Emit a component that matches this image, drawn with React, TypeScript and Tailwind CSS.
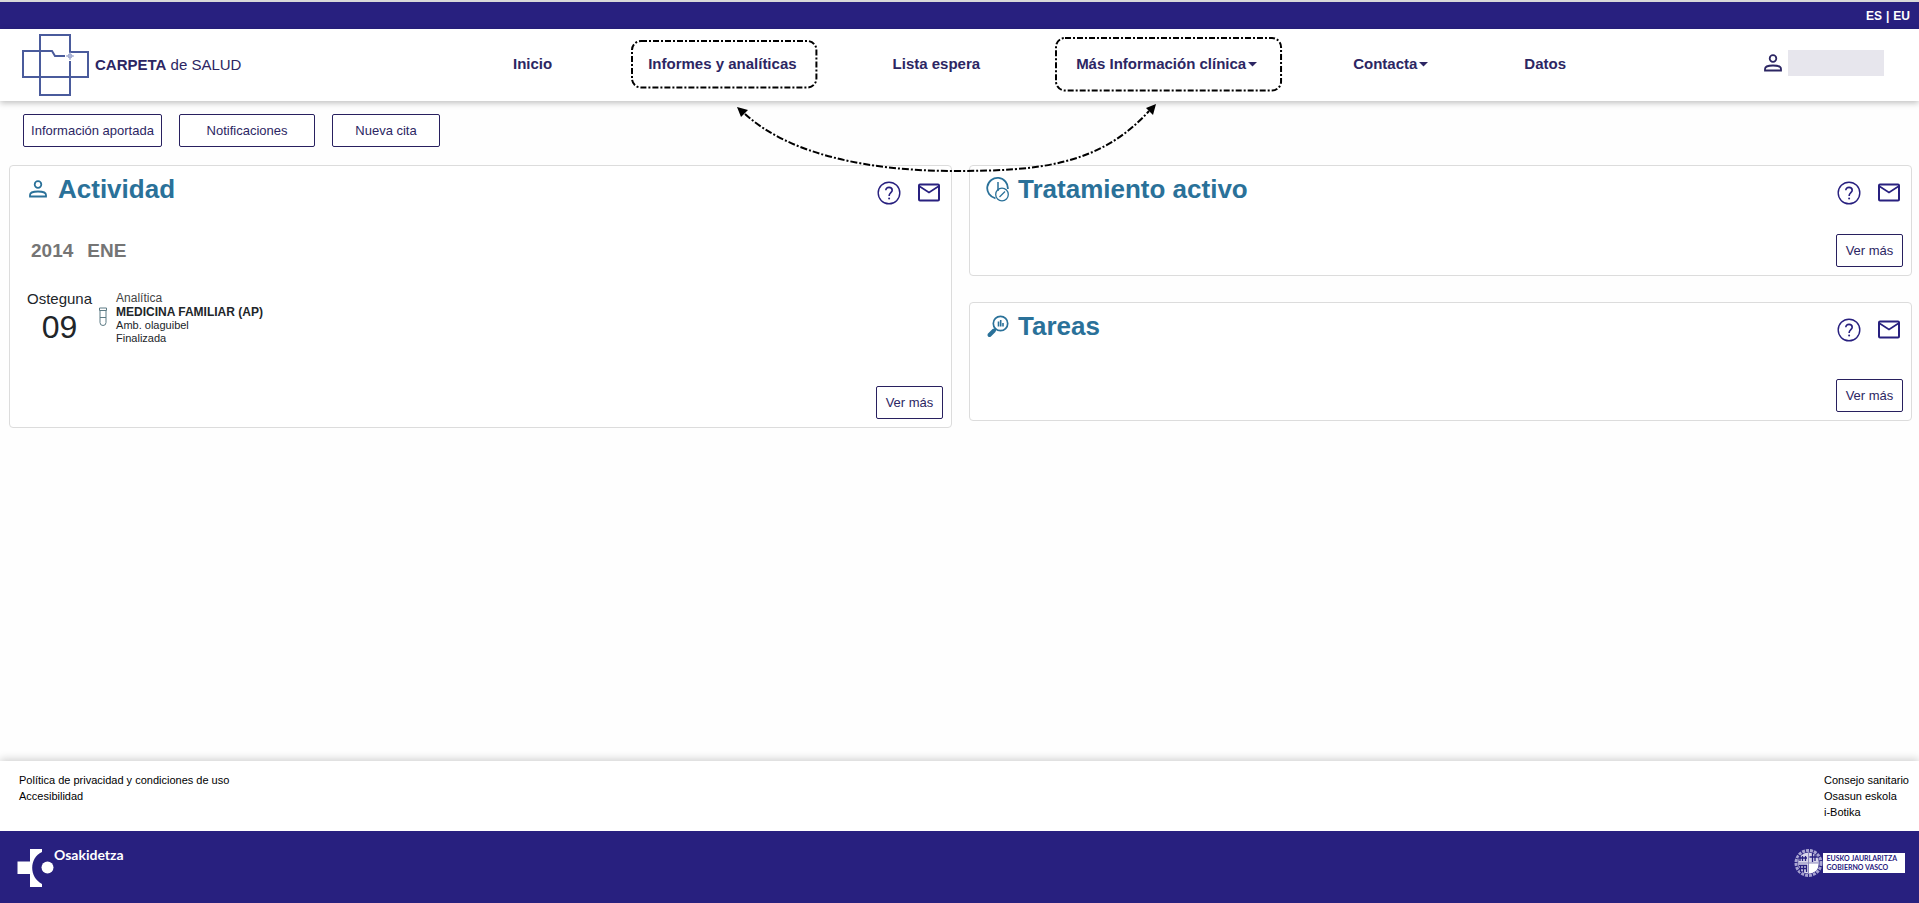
import type { ReactNode } from 'react'

const activity = {
  year: '2014',
  month: 'ENE',
  weekday: 'Osteguna',
  day: '09',
  type: 'Analítica',
  service: 'MEDICINA FAMILIAR (AP)',
  center: 'Amb. olaguibel',
  status: 'Finalizada',
}

function FolderLogo() {
  return (
    <svg width="68" height="62" viewBox="0 0 68 62" fill="none" stroke="#4a5b9c" strokeWidth="2" aria-hidden="true">
      <path d="M48 27V61H18V1H48V18H66V43H1V17H30L33 22H43" />
      <circle cx="48" cy="22" r="2" strokeWidth="1" stroke="#8f9bc8" />
      <path d="M44 22h8M48 18v8" strokeWidth="1" stroke="#8f9bc8" />
    </svg>
  )
}

function PersonIcon() {
  return (
    <svg width="18" height="18" viewBox="0 0 18 18" fill="none" stroke="currentColor" strokeWidth="1.8" aria-hidden="true">
      <circle cx="9" cy="4.5" r="3.3" />
      <path d="M1 16.5V15C1 12.6 5 11.5 9 11.5S17 12.6 17 15V16.5Z" />
    </svg>
  )
}

function TreatmentIcon() {
  return (
    <svg width="24" height="26" viewBox="0 0 24 26" fill="none" stroke="currentColor" aria-hidden="true">
      <path d="M9.5 22.3A10.3 10.3 0 1 1 21.8 13" strokeWidth="1.8" />
      <path d="M12 6V15" strokeWidth="1.5" />
      <circle cx="16" cy="18.5" r="6.3" strokeWidth="1.3" />
      <path d="M13.5 21L19 15.500" strokeWidth="1.3" />
    </svg>
  )
}

function TasksIcon() {
  return (
    <svg width="24" height="24" viewBox="0 0 24 24" fill="none" stroke="currentColor" aria-hidden="true">
      <circle cx="14.5" cy="9.5" r="7.2" strokeWidth="1.7" />
      <path d="M9.5 15L7.5 17" strokeWidth="2" />
      <path d="M8 16.5L3.5 21" strokeWidth="4" strokeLinecap="round" />
      <path d="M12.5 7.5V12.5M14.7 6V12.5M17 9V12.5" strokeWidth="1.6" />
    </svg>
  )
}

function HelpIcon() {
  return (
    <svg width="24" height="24" viewBox="0 0 24 24" fill="none" stroke="currentColor" aria-hidden="true">
      <circle cx="12" cy="12" r="10.8" strokeWidth="1.4" />
      <path d="M8.8 9.3C8.8 7.4 10.2 6.4 12 6.4S15.2 7.5 15.2 9.2C15.2 11.6 12.1 11.7 12.1 14.9" strokeWidth="1.6" />
      <circle cx="12.1" cy="17.6" r="1" fill="currentColor" stroke="none" />
    </svg>
  )
}

function MailIcon() {
  return (
    <svg width="24" height="20" viewBox="0 0 24 20" fill="none" stroke="currentColor" strokeWidth="2" aria-hidden="true">
      <rect x="2" y="1.5" width="20" height="16" rx="1" />
      <path d="M2 3L12 9.500L22 3" strokeWidth="1.6" />
    </svg>
  )
}

function TubeIcon() {
  return (
    <svg width="10" height="20" viewBox="0 0 10 20" fill="none" stroke="#5d7b85" aria-hidden="true">
      <path d="M1.5 1H8.5V3.5H1.5ZM2 3.5V15.5A3 3 0 0 0 8 15.5V3.5M2 10.5H8" />
    </svg>
  )
}

function Caret() {
  return (
    <svg width="9" height="5" viewBox="0 0 9 5" fill="currentColor" aria-hidden="true">
      <path d="M0 0H9L4.500 4.500Z" />
    </svg>
  )
}

function DashedFrame({ className }: { className: string }) {
  return (
    <span className={`pointer-events-none absolute ${className}`}>
      <svg className="size-full overflow-visible" fill="none" stroke="#000" strokeWidth="2" aria-hidden="true">
        <rect width="100%" height="100%" rx="9" strokeDasharray="6 2 2 2" />
      </svg>
    </span>
  )
}

// Links the two highlighted menu entries.
function MenuArrow() {
  return (
    <svg
      className="pointer-events-none absolute left-[735px] top-[73px] z-10"
      width="424"
      height="72"
      viewBox="735 102 424 72"
      fill="none"
      aria-hidden="true"
    >
      <path d="M745 114C790 155 870 171 955 171S1100 165 1149 111" stroke="#000" strokeWidth="2" strokeDasharray="7 2 2 2" />
      <path d="M737 107L748 110L741 117Z" fill="#000" />
      <path d="M1156 104L1153 115L1146 108Z" fill="#000" />
    </svg>
  )
}

function OsakidetzaLogo() {
  return (
    <div className="flex items-start text-white">
      <svg width="37" height="40" viewBox="0 0 37 40" fill="currentColor" aria-hidden="true">
        <path d="M13 1H25V4C12 10 12 29 25 36V39H13V26H0.500V13.500H13Z" />
        <circle cx="30.5" cy="19.5" r="6" />
      </svg>
      <span className="font-['Lato',sans-serif] text-[14px] font-bold leading-[14px]">Osakidetza</span>
    </div>
  )
}

function GovernmentLogo() {
  return (
    <div className="flex items-center">
      <svg width="29" height="30" viewBox="1 1 29 30" fill="none" aria-hidden="true">
        <circle cx="15.5" cy="16" r="12.500" stroke="#a9a5d2" strokeWidth="3" strokeDasharray="3 1" />
        <circle cx="15.5" cy="16" r="10.500" fill="#d9d7ea" />
        <path d="M15.500 16H25V20C25 23 21 26 15.500 26.500Z" fill="#fff" />
        <path d="M7 8V14M9.500 9V14M12.500 9V14M5.500 11H14M19.500 6V15M16.500 10H24M22 8V14" stroke="#28207f" strokeWidth="1.3" />
        <path d="M6 18.500H14M6 21.500H14M7.500 18V25M10.500 18V25M13.500 18V25" stroke="#28207f" strokeWidth="1.3" />
        <path d="M4.500 16H26.500M15.500 5V27" stroke="#8d89bd" />
      </svg>
      <div className="bg-white py-px pl-1 pr-2 font-['Lato',sans-serif] text-[7px] font-bold leading-[9px] text-[#28207f]">
        <p>EUSKO JAURLARITZA</p>
        <p>GOBIERNO VASCO</p>
      </div>
    </div>
  )
}

function OutlineButton({ className, children }: { className: string; children: ReactNode }) {
  return (
    <button
      type="button"
      className={`h-[33px] rounded-[2px] border border-[#28205f] bg-white text-center text-[13px] text-[#2c2663] ${className}`}
    >
      {children}
    </button>
  )
}

type CardProps = {
  title: string
  icon: ReactNode
  className: string
  children?: ReactNode
}

function Card({ title, icon, className, children }: CardProps) {
  return (
    <section className={`flex flex-col rounded-[4px] border border-[#dcdcdc] bg-white pb-2 ${className}`}>
      <div className="flex h-[42px] items-start justify-between pl-4 pr-[10px]">
        <h2 className="flex items-center gap-2 pt-[7px] text-[26px] font-bold leading-8 text-[#2a7199]">
          <span className="flex w-6 justify-center">{icon}</span>
          {title}
        </h2>
        <div className="flex items-center gap-4 pt-[15px] text-[#28207f]">
          <button type="button" aria-label={`Ayuda: ${title}`}>
            <HelpIcon />
          </button>
          <button type="button" aria-label={`Mensajes: ${title}`}>
            <MailIcon />
          </button>
        </div>
      </div>
      {children}
      <div className="mt-auto flex justify-end pr-2">
        <OutlineButton className="w-[67px]">Ver más</OutlineButton>
      </div>
    </section>
  )
}

function Header() {
  return (
    <header className="relative flex h-[72px] items-center bg-white pr-[35px] text-[15px] text-[#2c2663] shadow-[0_2px_6px_rgba(0,0,0,0.25)]">
      <a href="#" className="flex w-[513px] shrink-0 items-center gap-[5px] pl-[22px]">
        <FolderLogo />
        <span>
          <strong>CARPETA</strong> de SALUD
        </span>
      </a>
      <nav className="flex items-center gap-24 whitespace-nowrap pb-[2px] font-bold">
        <a href="#">Inicio</a>
        <a href="#" className="relative">
          Informes y analíticas
          <DashedFrame className="-inset-y-3 -left-4 -right-5" />
        </a>
        <a href="#">Lista espera</a>
        <button type="button" className="relative flex items-center gap-[2px]">
          Más Información clínica
          <Caret />
          <DashedFrame className="-inset-y-[15px] -left-5 -right-6" />
        </button>
        <button type="button" className="flex items-center gap-[2px]">
          Contacta
          <Caret />
        </button>
        <a href="#">Datos</a>
      </nav>
      <div className="ml-auto flex items-center gap-[6px] pb-1">
        <PersonIcon />
        <div className="h-[26px] w-24 bg-[#e7e6ed]" />
      </div>
      <MenuArrow />
    </header>
  )
}

function Footer() {
  return (
    <footer>
      <div className="flex min-h-[70px] justify-between bg-white pb-2 pl-[19px] pr-[10px] pt-[11px] text-[11px] leading-4 text-black shadow-[0_-2px_8px_rgba(0,0,0,0.18)]">
        <ul>
          <li><a href="#">Política de privacidad y condiciones de uso</a></li>
          <li><a href="#">Accesibilidad</a></li>
        </ul>
        <ul>
          <li><a href="#">Consejo sanitario</a></li>
          <li><a href="#">Osasun eskola</a></li>
          <li><a href="#">i-Botika</a></li>
        </ul>
      </div>
      <div className="relative flex h-[72px] items-start justify-between bg-[#28207f] pl-[17px] pr-[14px] pt-[17px]">
        <OsakidetzaLogo />
        <GovernmentLogo />
      </div>
    </footer>
  )
}

export default function App() {
  return (
    <div className="flex min-h-screen flex-col bg-[#fefefe] font-['Liberation_Sans',Arial,sans-serif] text-[#212529]">
      <div className="flex h-[29px] items-center justify-end gap-1 border-t-2 border-[#d9d9d9] bg-[#28207f] pr-[9px] text-[12px] font-bold text-white">
        <a href="#">ES</a>
        <span>|</span>
        <a href="#">EU</a>
      </div>
      <Header />
      <main className="flex-1">
        <div className="flex gap-[17px] pl-[23px] pt-[13px]">
          <OutlineButton className="w-[139px]">Información aportada</OutlineButton>
          <OutlineButton className="w-[136px]">Notificaciones</OutlineButton>
          <OutlineButton className="w-[108px]">Nueva cita</OutlineButton>
        </div>
        <div className="grid grid-cols-2 items-start gap-[17px] pl-[9px] pr-[7px] pt-[18px]">
          <Card title="Actividad" icon={<PersonIcon />} className="min-h-[263px]">
            <h3 className="mt-[31px] flex gap-[14px] pl-[21px] text-[19px] font-bold leading-6 text-[#757575]">
              <span>{activity.year}</span>
              <span>{activity.month}</span>
            </h3>
            <div className="mt-7 flex pl-[17px]">
              <div className="text-center">
                <p className="text-[15px] leading-4">{activity.weekday}</p>
                <p className="text-[32px] leading-10">{activity.day}</p>
              </div>
              <div className="ml-[6px] mt-4">
                <TubeIcon />
              </div>
              <div className="ml-2 text-[11px] leading-[13px]">
                <p className="text-[12px] leading-[14px] text-[#444]">{activity.type}</p>
                <p className="text-[12px] font-bold leading-[14px]">{activity.service}</p>
                <p>{activity.center}</p>
                <p>{activity.status}</p>
              </div>
            </div>
          </Card>
          <div className="flex flex-col gap-[26px]">
            <Card title="Tratamiento activo" icon={<TreatmentIcon />} className="min-h-[111px]" />
            <Card title="Tareas" icon={<TasksIcon />} className="min-h-[119px]" />
          </div>
        </div>
      </main>
      <Footer />
    </div>
  )
}
